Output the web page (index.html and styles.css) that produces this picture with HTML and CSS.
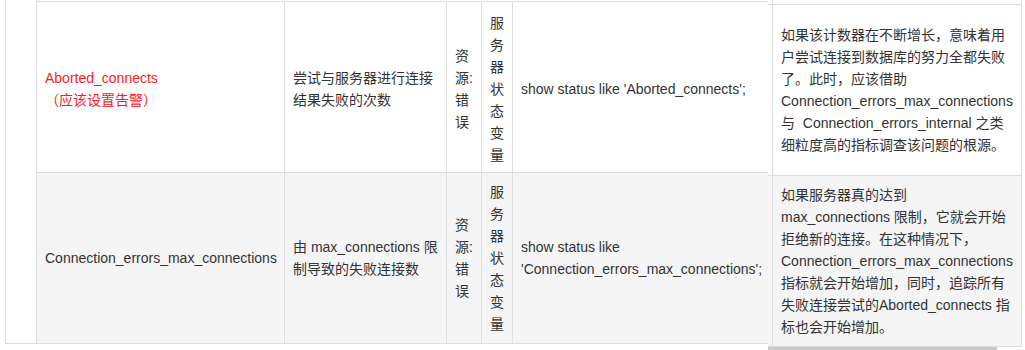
FILE: index.html
```html
<!DOCTYPE html>
<html lang="zh">
<head>
<meta charset="utf-8">
<title>Table</title>
<link rel="stylesheet" href="styles.css">
</head>
<body>
<div class="page">
  <div class="grid">
    <div class="c c0"></div>

    <div class="c r1 k1 red"><div>Aborted_connects<br>（应该设置告警）</div></div>
    <div class="c r1 k2"><div>尝试与服务器进行连接结果失败的次数</div></div>
    <div class="c r1 k3"><div>资源:错误</div></div>
    <div class="c r1 k4"><div>服务器状态变量</div></div>
    <div class="c r1 k5"><div>show status like 'Aborted_connects';</div></div>
    <div class="c r1 k6"></div>

    <div class="c r2 k1"><div>Connection_errors_max_connections</div></div>
    <div class="c r2 k2"><div>由 max_connections 限制导致的失败连接数</div></div>
    <div class="c r2 k3"><div>资源:错误</div></div>
    <div class="c r2 k4"><div>服务器状态变量</div></div>
    <div class="c r2 k5"><div>show status like 'Connection_errors_max_connections';</div></div>
    <div class="c r2 k6"></div>
  </div>

  <div class="fixed">
    <div class="fgrid">
      <div class="fs fs0"></div>
      <div class="fc fc0"></div>
      <div class="fs fr1"></div>
      <div class="fc fr1"><div>如果该计数器在不断增长，意味着用户尝试连接到数据库的努力全都失败了。此时，应该借助 Connection_errors_max_connections 与&nbsp; Connection_errors_internal 之类细粒度高的指标调查该问题的根源。</div></div>
      <div class="fs fr2"></div>
      <div class="fc fr2"><div>如果服务器真的达到 max_connections 限制，它就会开始拒绝新的连接。在这种情况下，Connection_errors_max_connections 指标就会开始增加，同时，追踪所有失败连接尝试的Aborted_connects 指标也会开始增加。</div></div>
    </div>
    <div class="bar"></div>
  </div>
</div>
</body>
</html>
```

FILE: styles.css
```css
html, body {
  margin: 0;
  padding: 0;
  background: #ffffff;
  overflow: hidden;
}

body {
  font-family: "Liberation Sans", "Noto Sans CJK SC", sans-serif;
  font-size: 14px;
  color: #333333;
}

.page {
  position: relative;
  width: 1025px;
  height: 350px;
}

.grid {
  display: grid;
  grid-template-columns: 32px 248px 162px 35px 31px 288px 220px;
  grid-template-rows: 1px 172px 171px;
  margin-left: 5px;
}

.c {
  box-sizing: border-box;
  display: flex;
  align-items: center;
  border-right: 1px solid #dddddd;
  border-bottom: 1px solid #dddddd;
  padding: 8px;
  line-height: 22px;
  min-width: 0;
}

.c0 {
  grid-row: 1 / 4;
  grid-column: 1;
  border-left: 1px solid #dddddd;
  background: #ffffff;
}

.r1 {
  grid-row: 2;
  border-top: 1px solid #dddddd;
  padding-top: 10px;
  padding-bottom: 7px;
  background: #ffffff;
}

.r2 {
  grid-row: 3;
  background: #f5f5f5;
}

.k1 { padding-right: 6px; }
.k2 { padding-right: 7px; }
.k3 { padding-right: 7px; }
.k4 { padding-right: 8px; }

.red {
  color: #ff1a1a;
}

.fixed {
  position: absolute;
  left: 768px;
  top: 0;
  width: 254px;
  background: #ffffff;
}

.fgrid {
  display: grid;
  grid-template-columns: 4px 250px;
  grid-template-rows: 4px 172px 171px;
}

.fs, .fc {
  box-sizing: border-box;
}

.fs.fr1, .fs.fr2 {
  border-bottom: 1px solid #dddddd;
}

.fs.fr1 {
  border-top: 1px solid #dddddd;
  background: #ffffff;
}

.fs.fr2 {
  background: #f5f5f5;
}

.fc {
  border-left: 1px solid #dddddd;
  border-right: 1px solid #dddddd;
}

.fc.fr1, .fc.fr2 {
  display: flex;
  align-items: center;
  border-bottom: 1px solid #dddddd;
  padding: 8px 7px 8px 8px;
  line-height: 22px;
}

.fc.fr1 {
  border-top: 1px solid #dddddd;
  background: #ffffff;
}

.fc.fr2 {
  background: #f5f5f5;
}

.bar {
  width: 229px;
  height: 3px;
  background: #c8c8c8;
}
```
